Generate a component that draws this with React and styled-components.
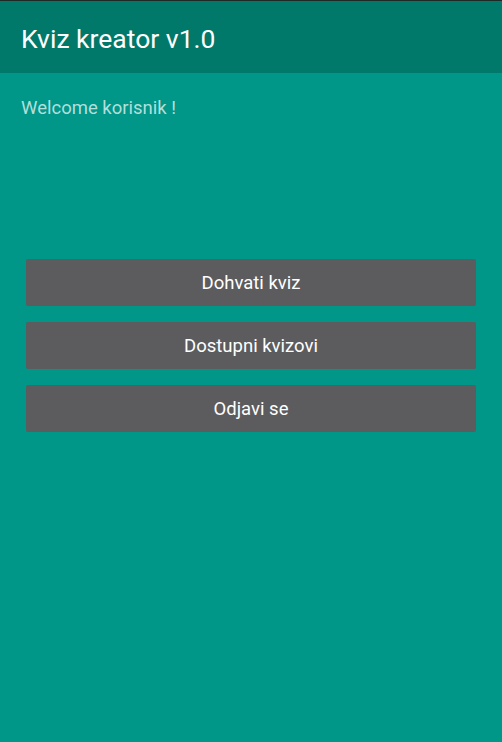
import React from "react";
import styled, { createGlobalStyle } from "styled-components";

const GlobalStyle = createGlobalStyle`
  html, body {
    margin: 0;
    padding: 0;
    height: 100%;
    background: #009688;
    font-family: Roboto, "Noto Sans", sans-serif;
  }
  #root {
    height: 100%;
  }
`;

const Screen = styled.div`
  display: flex;
  flex-direction: column;
  min-height: 742px;
  background: #009688;
`;

const StatusEdge = styled.div`
  height: 1px;
  background: #1c2a28;
`;

const Toolbar = styled.header`
  height: 72px;
  display: flex;
  align-items: center;
  padding: 0 21px;
  background: #00796b;
`;

const Title = styled.h1`
  margin: 0;
  font-size: 26.5px;
  font-weight: 400;
  color: #ffffff;
  padding-top: 3px;
`;

const Content = styled.main`
  display: flex;
  flex-direction: column;
  padding: 24px 26px 0 21px;
`;

const Welcome = styled.p`
  margin: 0;
  font-size: 18.5px;
  line-height: 22px;
  color: #b2dfdb;
`;

const Actions = styled.div`
  display: flex;
  flex-direction: column;
  gap: 16px;
  margin: 140px 0 0 5px;
`;

const Button = styled.button`
  height: 47px;
  border: none;
  border-radius: 2px;
  background: #5c5c5e;
  color: #ffffff;
  font-family: Roboto, "Noto Sans", sans-serif;
  font-size: 18.5px;
  cursor: pointer;
`;

const actions = ["Dohvati kviz", "Dostupni kvizovi", "Odjavi se"];

const App = () => {
  return (
    <Screen>
      <GlobalStyle />
      <StatusEdge />
      <Toolbar>
        <Title>Kviz kreator v1.0</Title>
      </Toolbar>
      <Content>
        <Welcome>Welcome korisnik !</Welcome>
        <Actions>
          {actions.map((label) => (
            <Button key={label}>{label}</Button>
          ))}
        </Actions>
      </Content>
    </Screen>
  );
};

export default App;
